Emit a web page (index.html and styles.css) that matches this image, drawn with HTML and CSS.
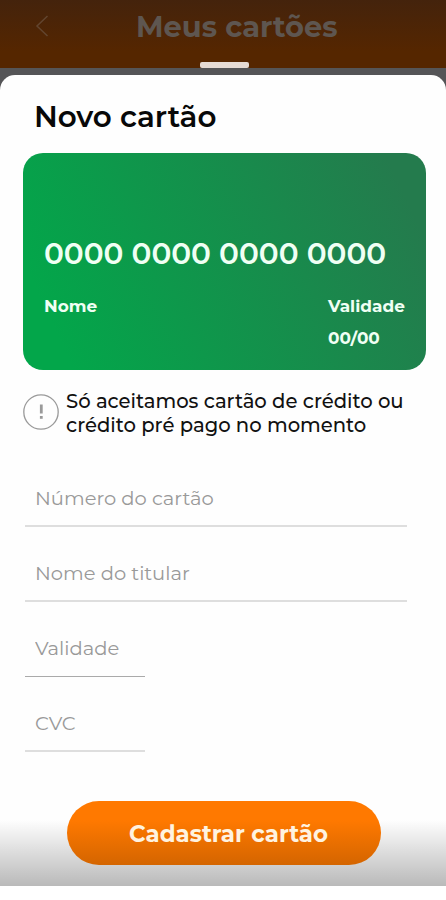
FILE: index.html
```html
<!DOCTYPE html>
<html lang="pt-BR">
<head>
    <meta charset="UTF-8">
    <meta name="viewport" content="width=device-width, initial-scale=1.0">
    <title>Novo cartão</title>
    <link rel="stylesheet" href="styles.css">
</head>
<body>
    <div class="app">
        <header class="header">
            <svg class="back" viewBox="0 0 14 22" fill="none" stroke="currentColor" stroke-width="1.5">
                <path d="M12.5 1 L2 11 L12.5 21"/>
            </svg>
            <h1>Meus cartões</h1>
            <span class="handle"></span>
        </header>

        <main class="sheet">
            <h2>Novo cartão</h2>

            <!-- Prévia do cartão -->
            <div class="card">
                <div class="card-number">0000 0000 0000 0000</div>
                <div class="card-info">
                    <span>Nome</span>
                    <div class="card-validity">
                        <span>Validade</span>
                        <span>00/00</span>
                    </div>
                </div>
            </div>

            <div class="notice">
                <svg class="notice-icon" viewBox="0 0 36 36" fill="none" stroke="#9a9a9a">
                    <circle cx="18" cy="18" r="17.2" stroke-width="1.3"/>
                    <path d="M18.3 10.5v9" stroke-width="2.8"/>
                    <path d="M18.3 22v2.8" stroke-width="2.8"/>
                </svg>
                <p>Só aceitamos cartão de crédito ou<br>crédito pré pago no momento</p>
            </div>

            <form>
                <input type="text" placeholder="Número do cartão">
                <input type="text" placeholder="Nome do titular">
                <input class="short validity" type="text" placeholder="Validade">
                <input class="short" type="text" placeholder="CVC">
                <button type="button">Cadastrar cartão</button>
            </form>
            <div class="shade"></div>
        </main>
    </div>
</body>
</html>
```
FILE: styles.css
```css
* {
    box-sizing: border-box;
}
body {
    margin: 0;
    background-color: #fff;
    font-family: Montserrat, Inter, sans-serif;
}
.app {
    width: 446px;
    height: 886px;
    background-color: #555557;
    overflow: hidden;
}
.header {
    position: relative;
    height: 68px;
    margin-bottom: 7px;
    background: linear-gradient(#44230c, #552600 75%);
    color: #5e5650;
}
.header h1 {
    margin: 0;
    padding: 9px 0 0 136px;
    font-size: 28.9px;
    line-height: 36px;
    white-space: nowrap;
}
.back {
    position: absolute;
    top: 15px;
    left: 35px;
    width: 14px;
    height: 22px;
    color: #62452f;
}
.handle {
    position: absolute;
    left: 200px;
    bottom: 0;
    width: 49px;
    height: 6px;
    border-radius: 2px;
    background-color: #e6dbd4;
}
.sheet {
    position: relative;
    height: 811px;
    padding: 24px 20px 0 23px;
    border-radius: 15px 15px 0 0;
    background-color: #fefefe;
}
h2 {
    margin: 0 0 18px 11px;
    font-size: 29.4px;
    font-weight: 600;
    line-height: 36px;
    color: #080808;
}
.card {
    height: 217px;
    padding: 82px 20px 0 21px;
    border-radius: 20px;
    background: linear-gradient(65deg, #03a64a 10%, #247b4d 92%);
    color: #f0fff4;
    font-weight: 700;
}
.card-number {
    font-size: 29.5px;
    font-weight: 600;
    line-height: 36px;
    white-space: nowrap;
}
.card-info {
    display: flex;
    justify-content: space-between;
    margin-top: 23px;
    font-size: 16.9px;
    line-height: 24px;
}
.card-validity {
    display: flex;
    flex-direction: column;
    width: 78px;
    gap: 8px;
}
.notice {
    display: flex;
    margin-top: 19px;
    gap: 7px;
}
.notice-icon {
    width: 36px;
    height: 36px;
    margin-top: 5px;
    flex-shrink: 0;
}
.notice p {
    margin: 0;
    font-size: 19.6px;
    font-weight: 500;
    line-height: 24px;
    color: #111;
    white-space: nowrap;
}
form {
    display: flex;
    flex-direction: column;
    align-items: flex-start;
    gap: 25px;
    margin-top: 40px;
    padding-left: 2px;
}
input {
    width: 382px;
    height: 50px;
    padding: 0 10px 6px;
    border: none;
    border-bottom: 2px solid #dedede;
    background: none;
    font-family: inherit;
    font-size: 19.5px;
    outline: none;
}
input::placeholder {
    color: #999;
}
.short {
    width: 120px;
}
.validity {
    padding-bottom: 8px;
    border-bottom: 1px solid #aaa;
}
button {
    position: relative;
    z-index: 1;
    width: 314px;
    height: 64px;
    margin: 24px 0 0 42px;
    padding: 1px 0 0 9px;
    border: none;
    border-radius: 32px;
    background: linear-gradient(#ff7900 30%, #d46500);
    color: #fff3e0;
    font-family: inherit;
    font-size: 22.9px;
    font-weight: 700;
    cursor: pointer;
}
/* sombra no rodapé da tela */
.shade {
    position: absolute;
    left: 0;
    right: 0;
    bottom: 0;
    height: 66px;
    background: linear-gradient(rgba(0, 0, 0, 0), rgba(0, 0, 0, 0.27));
    pointer-events: none;
}
```
